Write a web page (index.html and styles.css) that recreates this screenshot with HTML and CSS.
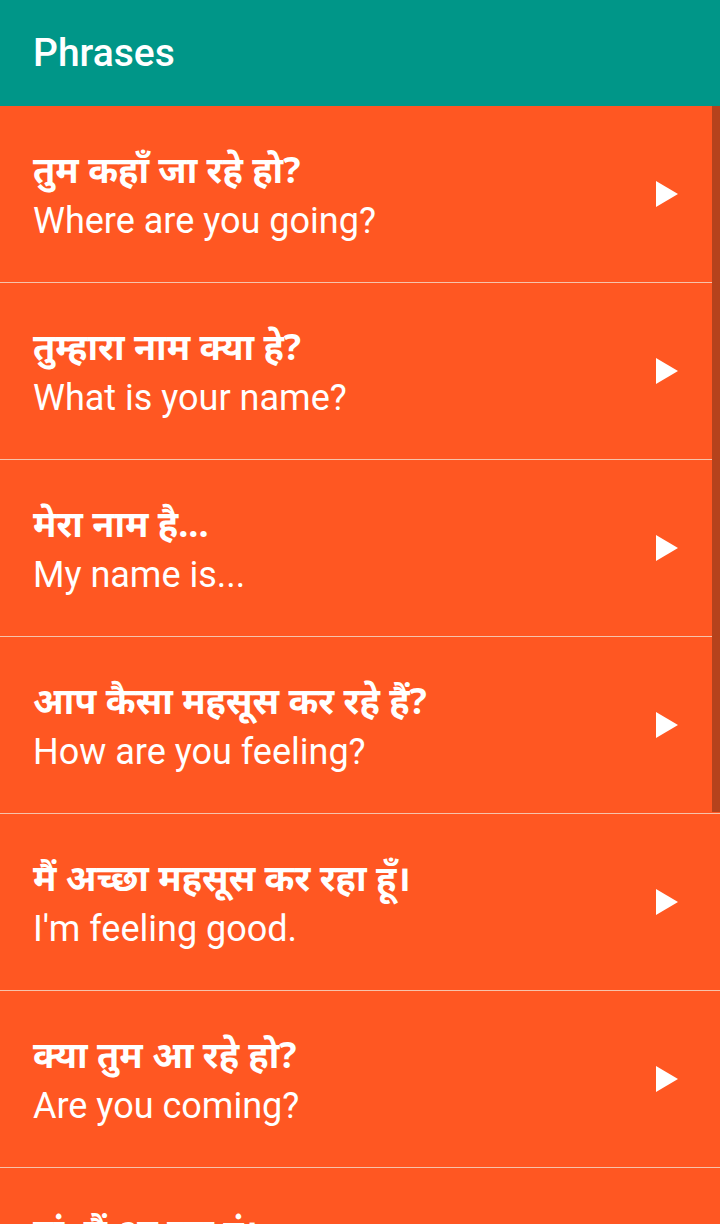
FILE: index.html
```html
<!DOCTYPE html>
<html lang="hi">
<head>
<meta charset="utf-8">
<title>Phrases</title>
<link rel="stylesheet" href="styles.css">
</head>
<body>
<header class="appbar"><h1 class="title">Phrases</h1></header>
<main class="list">
  <div class="scrollbar"></div>
  <div class="row"><div class="texts"><div class="hi">तुम कहाँ जा रहे हो?</div><div class="en">Where are you going?</div></div><svg class="play" viewBox="0 0 22 26"><path d="M0 0 L22 13 L0 26 Z"/></svg></div>
  <div class="row"><div class="texts"><div class="hi">तुम्हारा नाम क्या हे?</div><div class="en">What is your name?</div></div><svg class="play" viewBox="0 0 22 26"><path d="M0 0 L22 13 L0 26 Z"/></svg></div>
  <div class="row"><div class="texts"><div class="hi">मेरा नाम है...</div><div class="en">My name is...</div></div><svg class="play" viewBox="0 0 22 26"><path d="M0 0 L22 13 L0 26 Z"/></svg></div>
  <div class="row"><div class="texts"><div class="hi">आप कैसा महसूस कर रहे हैं?</div><div class="en">How are you feeling?</div></div><svg class="play" viewBox="0 0 22 26"><path d="M0 0 L22 13 L0 26 Z"/></svg></div>
  <div class="row"><div class="texts"><div class="hi">मैं अच्छा महसूस कर रहा हूँ।</div><div class="en">I'm feeling good.</div></div><svg class="play" viewBox="0 0 22 26"><path d="M0 0 L22 13 L0 26 Z"/></svg></div>
  <div class="row"><div class="texts"><div class="hi">क्या तुम आ रहे हो?</div><div class="en">Are you coming?</div></div><svg class="play" viewBox="0 0 22 26"><path d="M0 0 L22 13 L0 26 Z"/></svg></div>
  <div class="row"><div class="texts"><div class="hi">हां, मैं आ रहा हूं।</div><div class="en">Yes, I'm coming.</div></div><svg class="play" viewBox="0 0 22 26"><path d="M0 0 L22 13 L0 26 Z"/></svg></div>
</main>
</body>
</html>
```
FILE: styles.css
```css
html, body {
  margin: 0;
  padding: 0;
  height: 1224px;
  overflow: hidden;
  background: #FF5722;
  font-family: Roboto, "Noto Sans", sans-serif;
  color: #fff;
}
.appbar {
  height: 106px;
  background: #009688;
  display: flex;
  align-items: center;
  padding-left: 33px;
  box-sizing: border-box;
}
.title {
  margin: 0;
  font-size: 39px;
  font-weight: 500;
  line-height: 1;
  padding-top: 1px;
}
.list {
  position: relative;
}
.scrollbar {
  position: absolute;
  top: 0;
  right: 0;
  width: 8px;
  height: 706px;
  background: #B5421C;
}
.row {
  height: 176px;
  border-bottom: 1px solid #F6C3AB;
  display: flex;
  align-items: center;
  justify-content: space-between;
  padding: 0 42px 0 33px;
}
.texts {
  display: flex;
  flex-direction: column;
  padding-top: 4px;
}
.hi {
  font-family: "Noto Sans", "Noto Sans Devanagari", sans-serif;
  font-weight: 700;
  font-size: 36px;
  line-height: 46px;
}
.en {
  font-family: Roboto, sans-serif;
  font-size: 36px;
  line-height: 48px;
  margin-top: 4px;
}
.play {
  width: 22px;
  height: 26px;
  fill: #fff;
  flex: none;
}
```
